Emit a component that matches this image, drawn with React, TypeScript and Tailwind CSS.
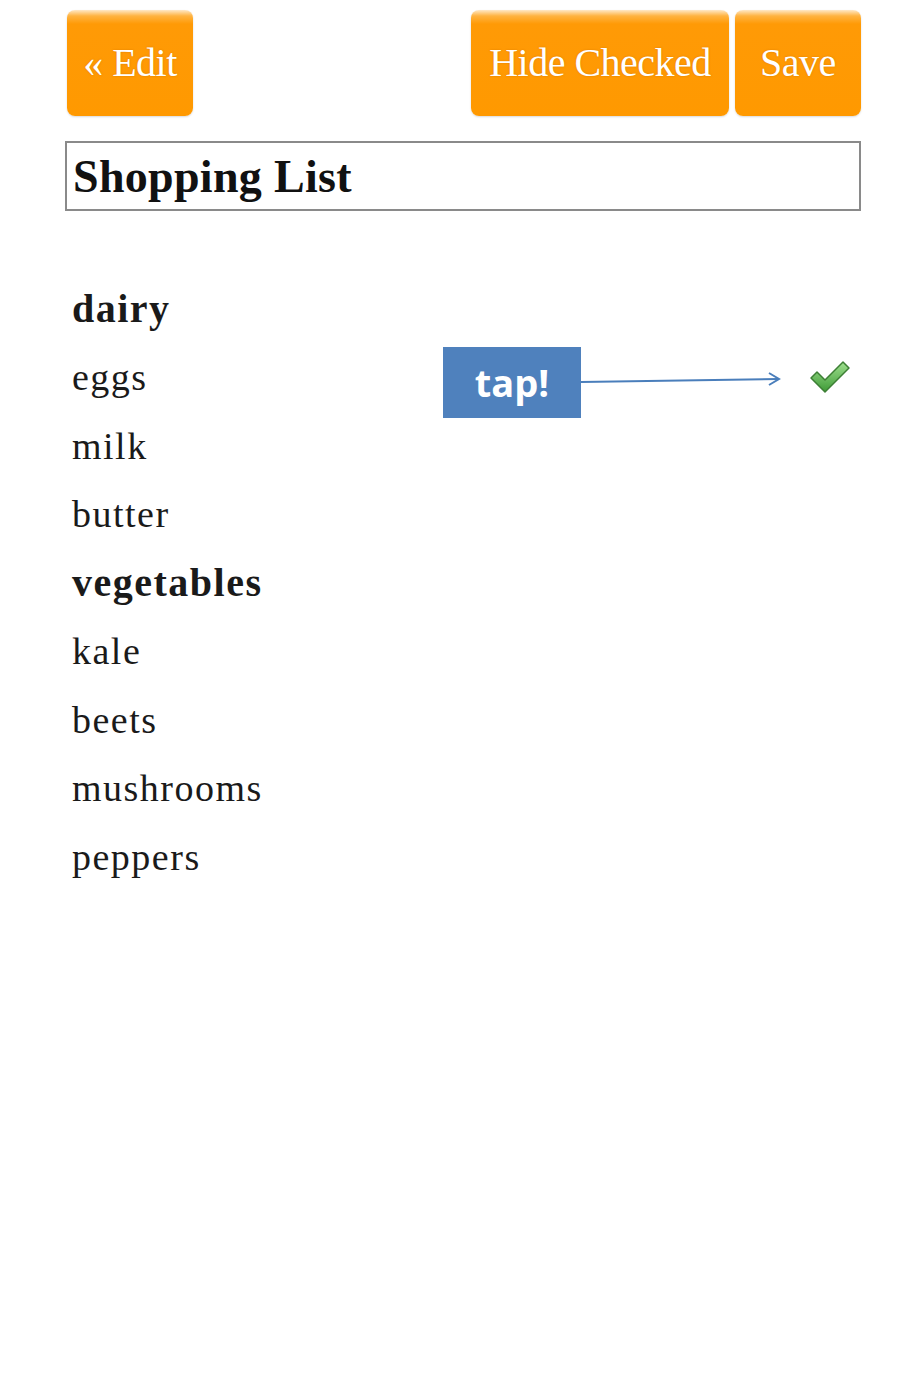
import type { ReactNode } from 'react';

const serif = "font-['Liberation_Serif',_'Times_New_Roman',_serif]";

const OrangeButton = ({ children, width }: { children: ReactNode; width: string }) => (
  <button
    className={`${serif} ${width} flex h-[106px] items-center justify-center rounded-[8px] bg-[linear-gradient(to_bottom,#ffe9c8_0px,#ffb340_6px,#ff9a06_14px,#ff9900_100%)] text-[40px] tracking-[-0.5px] text-white [text-shadow:0_0_2px_rgba(150,70,0,0.35)] shadow-[0_1px_2px_rgba(0,0,0,0.15)]`}
  >
    {children}
  </button>
);

const CheckIcon = () => (
  <svg width="42" height="34" viewBox="0 0 42 34">
    <defs>
      <linearGradient id="chk" x1="0" y1="0" x2="0" y2="1">
        <stop offset="0" stopColor="#9fe08f" />
        <stop offset="1" stopColor="#3e9a36" />
      </linearGradient>
    </defs>
    <path
      d="M2 18 L8 12 L16 20 L34 2 L40 8 L16 32 Z"
      fill="url(#chk)"
      stroke="#3d7f35"
      strokeWidth="1.5"
      strokeLinejoin="round"
    />
  </svg>
);

const rows: { label: string; bold?: boolean }[] = [
  { label: 'dairy', bold: true },
  { label: 'eggs' },
  { label: 'milk' },
  { label: 'butter' },
  { label: 'vegetables', bold: true },
  { label: 'kale' },
  { label: 'beets' },
  { label: 'mushrooms' },
  { label: 'peppers' },
];

export default function App() {
  return (
    <div className="h-[1382px] w-[921px] bg-white">
      <div className="pl-[67px] pr-[60px] pt-[10px]">
        <div className="flex items-start justify-between">
          <OrangeButton width="w-[126px]">« Edit</OrangeButton>
          <div className="flex gap-[6px]">
            <OrangeButton width="w-[258px]">Hide Checked</OrangeButton>
            <OrangeButton width="w-[126px]">Save</OrangeButton>
          </div>
        </div>

        <div className="-ml-[2px] mt-[25px] flex h-[70px] items-center border-2 border-[#8a8a8a] pl-[6px]">
          <span className={`${serif} text-[46px] font-bold tracking-[0.3px] text-[#111]`}>Shopping List</span>
        </div>

        <ul className="mt-[64px] flex flex-col">
          {rows.map((row) => (
            <li
              key={row.label}
              className={`${serif} relative flex h-[68.5px] items-center justify-between pl-[5px] tracking-[1.5px] text-[#1a1a1a] ${row.bold ? 'text-[40px] font-bold' : 'text-[38px]'}`}
            >
              <span>{row.label}</span>
              {row.label === 'eggs' ? (
                <>
                  <div className="absolute left-[376px] top-[3px] flex items-center">
                    <div className="flex h-[71px] w-[138px] items-center justify-center bg-[#4f81bd] font-['Open_Sans',_'Liberation_Sans',_sans-serif] text-[38px] font-bold tracking-normal text-white">
                      tap!
                    </div>
                    <svg width="200" height="20" viewBox="0 0 200 20" className="-mt-[2px]">
                      <line x1="0" y1="11" x2="197" y2="8" stroke="#4a7ebb" strokeWidth="2" />
                      <path d="M188 2 L198 8 L188 14" fill="none" stroke="#4a7ebb" strokeWidth="2" />
                    </svg>
                  </div>
                  <span className="mr-[10px] mt-[-2px]">
                    <CheckIcon />
                  </span>
                </>
              ) : null}
            </li>
          ))}
        </ul>
      </div>
    </div>
  );
}
